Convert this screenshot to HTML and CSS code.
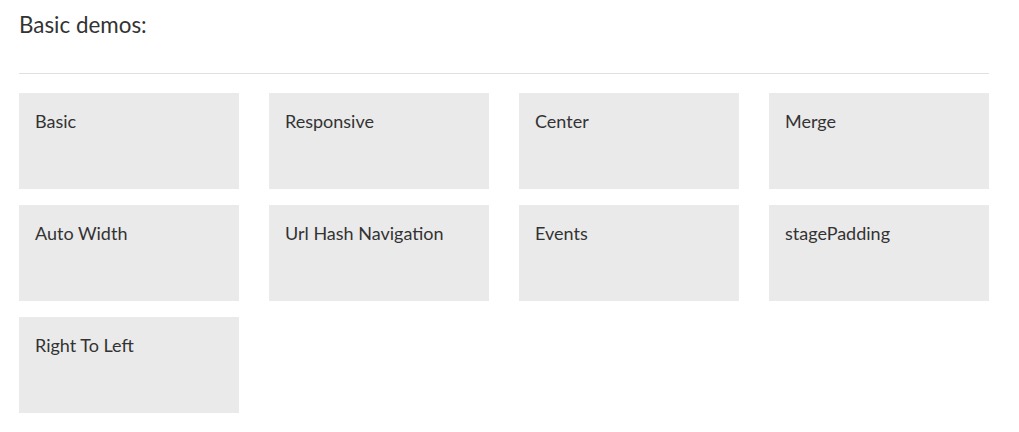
FILE: index.html
```html
<!DOCTYPE html>
<html>
<head>
<meta charset="utf-8">
<link rel="stylesheet" href="styles.css">
</head>
<body>
<div class="wrap">
  <h2 class="title">Basic demos:</h2>
  <hr class="rule">
  <div class="grid">
    <div class="tile">Basic</div>
    <div class="tile">Responsive</div>
    <div class="tile">Center</div>
    <div class="tile">Merge</div>
    <div class="tile">Auto Width</div>
    <div class="tile">Url Hash Navigation</div>
    <div class="tile">Events</div>
    <div class="tile">stagePadding</div>
    <div class="tile">Right To Left</div>
  </div>
</div>
</body>
</html>
```

FILE: styles.css
```css
html, body {
  margin: 0;
  padding: 0;
  background: #fff;
}
body {
  font-family: Lato, "Open Sans", sans-serif;
  color: #333;
}
.wrap {
  width: 970px;
  margin-left: 19px;
  padding-top: 10px;
}
.title {
  margin: 0;
  font-size: 22.4px;
  line-height: 30px;
  font-weight: 400;
  color: #333;
}
.rule {
  margin: 33px 0 19px 0;
  border: 0;
  border-top: 1px solid #e0e0e0;
  height: 0;
}
.grid {
  display: grid;
  grid-template-columns: repeat(4, 220px);
  column-gap: 30px;
  row-gap: 16px;
}
.tile {
  background: #eaeaea;
  height: 96px;
  box-sizing: border-box;
  padding: 16px 16px;
  font-size: 18px;
  line-height: 24px;
  color: #333;
}
```
